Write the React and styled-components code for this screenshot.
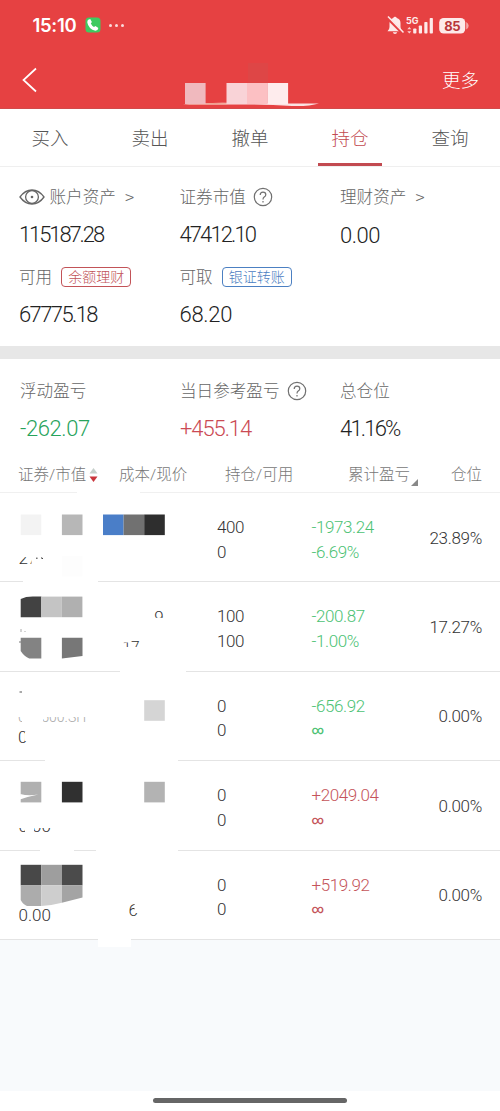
import React from "react";
import styled, { createGlobalStyle } from "styled-components";

const tabs = ["买入", "卖出", "撤单", "持仓", "查询"];

const TILE = 20.6;

const holdings = [
	{ amount: "400", usable: "0", profit: "-1973.24", rate: "-6.69%", share: "23.89%", mask: <MaskOne /> },
	{ amount: "100", usable: "100", profit: "-200.87", rate: "-1.00%", share: "17.27%", mask: <MaskTwo /> },
	{ amount: "0", usable: "0", profit: "-656.92", rate: "∞", share: "0.00%", mask: <MaskThree /> },
	{ amount: "0", usable: "0", profit: "+2049.04", rate: "∞", share: "0.00%", mask: <MaskFour /> },
	{ amount: "0", usable: "0", profit: "+519.92", rate: "∞", share: "0.00%", mask: <MaskFive /> }
];

function Tile({ x, y, fill }) {
	return <rect x={x} y={y} width={TILE} height={TILE} fill={fill} />;
}

function MaskOne() {
	return (
		<Mask>
			<rect x="77" y="-3" width="63" height="5" fill="#fff" />
			<Tile x={20.7} y={21.5} fill="#f3f3f3" />
			<Tile x={61.9} y={21.5} fill="#b7b7b7" />
			<Tile x={103} y={21.5} fill="#4a7ec8" />
			<Tile x={123.6} y={21.5} fill="#717171" />
			<Tile x={144.2} y={21.5} fill="#2e2e2e" />
			<text x="18.5" y="70.5">27</text>
			<rect x="16" y="56" width="40" height="8" fill="#fff" />
			<rect x="31.5" y="63" width="12" height="9" fill="#fff" />
			<path d="M36 65.2h1.6M41 64.8l2 .8" stroke="#333" fill="none" />
			<rect x="61.9" y="63" width={TILE} height={TILE} fill="#fdfdfd" />
			<rect x="23" y="86" width="75" height="7" fill="#fff" />
		</Mask>
	);
}

function MaskTwo() {
	return (
		<Mask>
			<path d="M20.7 17q5-2.4 12-2.4h8.6v20.6H20.7z" fill="#424242" />
			<Tile x={41.2} y={14.6} fill="#c4c4c4" />
			<Tile x={61.8} y={14.6} fill="#b0b0b0" />
			<path d="M21 47v3M24.5 49.5h1" stroke="#aaa" fill="none" />
			<path d="M20.7 55.8h20.6v20.6h-12q-5-2-8.6-7.5z" fill="#838383" />
			<path d="M61.9 55.8h20.6v18.3l-20.6 2.3z" fill="#777" />
			<path d="M19 60h2" stroke="#777" />
			<text x="154.3" y="40.5">9</text>
			<rect x="153" y="35.8" width="12" height="7" fill="#fff" />
			<text x="122.5" y="70" className="small">17</text>
			<rect x="120" y="65" width="22" height="8" fill="#fff" />
			<rect x="120" y="57" width="9.5" height="3.5" fill="#fff" />
			<rect x="120" y="86" width="66" height="6" fill="#fff" />
		</Mask>
	);
}

function MaskThree() {
	return (
		<Mask>
			<path d="M19.5 20h2.5" stroke="#555" />
			<Tile x={144.2} y={28.2} fill="#d5d5d5" />
			<text x="18" y="49.5" className="code">000500.SH</text>
			<rect x="16" y="37" width="75" height="8" fill="#fff" />
			<rect x="22" y="44" width="21" height="8" fill="#fff" />
			<text x="18" y="71">0</text>
			<rect x="25" y="60" width="6" height="9" fill="#fff" />
			<rect x="45" y="86" width="133" height="6" fill="#fff" />
		</Mask>
	);
}

function MaskFour() {
	return (
		<Mask>
			<Tile x={20.7} y={20.8} fill="#b0b0b0" />
			<path d="M20.3 33q8 2.200 18 .5-10 2-18.400 5z" fill="#fff" />
			<Tile x={61.9} y={20.8} fill="#303030" />
			<Tile x={144.2} y={20.8} fill="#b3b3b3" />
			<text x="18.5" y="70.5">0.00</text>
			<rect x="16" y="56" width="40" height="11" fill="#fff" />
			<rect x="25" y="65" width="9" height="7" fill="#fff" />
			<rect x="40" y="86" width="34" height="6" fill="#fff" />
			<rect x="96" y="86" width="82" height="6" fill="#fff" />
		</Mask>
	);
}

function MaskFive() {
	return (
		<Mask>
			<Tile x={20.7} y={13.8} fill="#484848" />
			<Tile x={41.3} y={13.8} fill="#9e9e9e" />
			<Tile x={61.9} y={13.8} fill="#4b4b4b" />
			<path d="M20.7 34.4h20.6V55H27q-4-1.5-6.3-6z" fill="#acacac" />
			<path d="M41.3 34.4h20.6v17.4Q52 54.5 41.3 55z" fill="#cecece" />
			<path d="M61.9 34.4h20.6V46.5l-20.6 5.3z" fill="#a4a4a4" />
			<text x="18.5" y="70">0.00</text>
			<text x="128.5" y="65">6</text>
			<rect x="134.6" y="52" width="5" height="10" fill="#fff" />
			<rect x="98" y="86" width="33" height="10" fill="#fff" />
		</Mask>
	);
}

const Help = () => (
	<svg width="20" height="20" viewBox="0 0 20 20" fill="none" stroke="#707070" strokeWidth="1.2">
		<circle cx="10" cy="10" r="8.7" />
		<path d="M7.2 8q0-2.9 2.8-2.9t2.8 2.6q0 1.3-1.6 2.4Q10 11 10 12.5M10 14v1.4" />
	</svg>
);

const Eye = () => (
	<svg width="26" height="18" viewBox="0 0 26 18" fill="none" stroke="#666" strokeWidth="1.3">
		<path d="M1 9Q6 2 13 2t12 7q-5 7-12 7T1 9z" />
		<circle cx="13" cy="9" r="6.4" />
		<circle cx="13" cy="9" r="1.3" fill="#666" stroke="none" />
	</svg>
);

const StatusIcons = () => (
	<svg width="84" height="24" viewBox="0 0 84 24">
		<g fill="#fdeaea">
			<path d="M1.500 18.2q2-1.700 2-4.200V10q0-4 3.800-5 .2-1.300 1.700-1.300t1.700 1.300q3.800 1 3.800 5v4q0 2.500 2 4.200zM6.800 19.300h4.400q-.4 1.700-2.200 1.700t-2.200-1.700z" />
			<path d="M23.300 14l2 2.300h-4zM23.300 20.500l2-2.300h-4z" opacity=".85" />
			<rect x="27.200" y="15.500" width="3.200" height="5" rx=".8" />
			<rect x="32.800" y="12.500" width="3.200" height="8" rx=".8" />
			<rect x="38.300" y="9" width="3.200" height="11.500" rx=".8" />
			<rect x="43.700" y="5" width="3.200" height="15.500" rx=".8" />
			<rect x="53.200" y="5" width="26" height="15.500" rx="4.500" />
			<path d="M80.200 9q2.500 1.500 2.500 3.800t-2.500 3.700z" opacity=".6" />
		</g>
		<path d="M1.500 5l16 16" stroke="#e64142" strokeWidth="3" />
		<path d="M2 3.500l15.500 16" stroke="#fdeaea" strokeWidth="1.500" />
		<text x="20" y="10.500" fill="#fdeaea" fontSize="9" fontWeight="700">5G</text>
		<text x="66.200" y="17.500" fill="#b8363a" fontSize="13" fontWeight="700" textAnchor="middle" letterSpacing="-.5">85</text>
	</svg>
);

const Hidden = () => (
	<svg width="140" height="46" viewBox="0 0 140 46">
		<rect x="66" y="2" width="20" height="20" fill="#d94a4a" opacity=".6" />
		<path d="M1 43.500q30-3 70-1h66q-10 3-27 2.500-30-2-60-1.500z" fill="#fbe3e3" />
		<path d="M1 43.500q22-2 44-1.300v1.300z" fill="#f0a08e" />
		<rect x="3" y="22" width="20.600" height="21" fill="#f0b9be" />
		<rect x="44.500" y="22" width="20.600" height="21" fill="#f9d3d7" />
		<rect x="65" y="22" width="20.600" height="21" fill="#fcc0c3" />
		<rect x="85.500" y="22" width="20.600" height="21" fill="#feeced" />
	</svg>
);

const App = () => (
	<Page>
		<GlobalStyle />
		<Header>
			<StatusBar>
				<Clock>15:10</Clock>
				<svg width="16" height="16" viewBox="0 0 16 16">
					<rect x=".5" y=".5" width="15" height="15" rx="3.500" fill="#3ecb60" />
					<path d="M3.200 2.700l2-.6 1.700 3-1.100 1.500q1.100 2.300 3.200 3.500l1.400-1 3 1.900q-.4 2.700-2.900 2.700Q3.500 12 2.300 5.400q0-1.800.9-2.700z" fill="#fff" />
				</svg>
				<Dots><i /><i /><i /></Dots>
				<StatusIcons />
			</StatusBar>
			<NavBar>
				<svg width="17" height="26" viewBox="0 0 17 26" fill="none" stroke="#fff" strokeWidth="1.700">
					<path d="M15 1.500L2.500 13 15 24.500" />
				</svg>
				<Hidden />
				<More>更多</More>
			</NavBar>
		</Header>
		<Tabs>
			{tabs.map(tab => <Tab key={tab} $active={tab === "持仓"}>{tab}</Tab>)}
		</Tabs>
		<Assets>
			<div>
				<Label><Eye /><Name $left={4.5}>账户资产</Name><Arrow>&gt;</Arrow></Label>
				<Value $space={-2.1}>115187.28</Value>
			</div>
			<div>
				<Label><Name>证券市值</Name><Help /></Label>
				<Value $space={-1.9}>47412.10</Value>
			</div>
			<div>
				<Label><Name>理财资产</Name><Arrow>&gt;</Arrow></Label>
				<Value $down>0.00</Value>
			</div>
			<div>
				<Label><Name>可用</Name><Badge $color="#c25358">余额理财</Badge></Label>
				<Value $space={-1.6}>67775.18</Value>
			</div>
			<div>
				<Label><Name>可取</Name><Badge $color="#4c80c2">银证转账</Badge></Label>
				<Value $space={-0.3}>68.20</Value>
			</div>
		</Assets>
		<Divider />
		<Summary>
			<div>
				<Label><Name $left={1}>浮动盈亏</Name></Label>
				<Value $left={1} $space={-0.4} $color="#27a35b">-262.07</Value>
			</div>
			<div>
				<Label><Name $left={0.5}>当日参考盈亏</Name><Help /></Label>
				<Value $left={0.5} $space={-1.1} $color="#cb4a54">+455.14</Value>
			</div>
			<div>
				<Label><Name>总仓位</Name></Label>
				<Value $space={-1.8}>41.16%</Value>
			</div>
		</Summary>
		<TableHead>
			<HeadCell>
				证券/市值
				<svg width="9" height="16" viewBox="0 0 9 16">
					<path d="M.5 6.500L4.500 1l4 5.500z" fill="#c5cfca" />
					<path d="M.5 9.500h8L4.500 15z" fill="#c9353b" />
				</svg>
			</HeadCell>
			<HeadCell>成本/现价</HeadCell>
			<HeadCell>持仓/可用</HeadCell>
			<HeadCell>累计盈亏<Corner /></HeadCell>
			<HeadCell>仓位</HeadCell>
		</TableHead>
		{holdings.map((item, i) => (
			<Row key={i}>
				{item.mask}
				<Pair><span>{item.amount}</span><span>{item.usable}</span></Pair>
				<Pair $color={item.profit[0] === "-" ? "#4cc274" : "#c4545a"}>
					<span>{item.profit}</span>
					{item.rate === "∞" ? <Infinite>∞</Infinite> : <span>{item.rate}</span>}
				</Pair>
				<Share>{item.share}</Share>
			</Row>
		))}
		<Blank />
		<HomeArea><HomeBar /></HomeArea>
	</Page>
);

export default App;

const GlobalStyle = createGlobalStyle`
	* {
		box-sizing: border-box;
	}

	body {
		margin: 0;
		background: #fff;
		font-family: Roboto, "Noto Sans CJK SC", sans-serif;
		font-weight: 300;
	}

	svg {
		display: block;
		flex: none;
	}
`;

const Page = styled.div`
	width: 500px;
	height: 1111px;
	overflow: hidden;
	display: flex;
	flex-direction: column;
	background: #fff;
`;

const Header = styled.div`
	height: 109px;
	flex: none;
	background: #e64142;
	border-bottom: 1px solid #d24a4a;
	color: #fff;
`;

const StatusBar = styled.div`
	height: 50px;
	padding: 0 30.5px 0 32.5px;
	display: flex;
	align-items: center;

	> svg:last-child {
		margin-left: auto;
		font-family: Inter, sans-serif;
	}
`;

const Clock = styled.span`
	width: 52.5px;
	font: 600 18.5px Inter, sans-serif;
	letter-spacing: -0.3px;
`;

const Dots = styled.span`
	display: flex;
	gap: 3px;
	margin-left: 7.5px;

	i {
		width: 3px;
		height: 3px;
		border-radius: 50%;
		background: #fbdada;
	}
`;

const NavBar = styled.div`
	height: 58px;
	padding: 0 21px 0 21px;
	display: flex;
	align-items: center;

	> svg:first-child {
		margin-top: 2px;
	}

	> svg + svg {
		margin: 10px 0 0 144px;
	}
`;

const More = styled.span`
	margin-left: auto;
	font-size: 18.5px;
`;

const Tabs = styled.div`
	height: 58px;
	flex: none;
	display: flex;
	border-bottom: 1px solid #efefef;
`;

const Tab = styled.div`
	width: 64px;
	height: 57px;
	margin: 0 18px;
	line-height: 60px;
	font-size: 18.5px;
	text-align: center;
	color: ${p => (p.$active ? "#c24a50" : "#555")};
	border-bottom: 3px solid ${p => (p.$active ? "#c24a50" : "transparent")};
`;

const Assets = styled.div`
	height: 179px;
	flex: none;
	padding: 20px 0 0 19px;
	display: grid;
	grid-template-columns: 160.5px 160.5px 1fr;
	grid-auto-rows: 57px;
	row-gap: 23px;
`;

const Summary = styled(Assets)`
	height: 98px;
	padding-top: 22px;
`;

const Label = styled.div`
	height: 20px;
	display: flex;
	align-items: center;
	color: #666;
`;

const Name = styled.span`
	margin-left: ${p => p.$left || 0}px;
	margin-right: 7.5px;
	font-size: 16.6px;
	line-height: 20px;
	padding-top: 2px;
`;

const Arrow = styled.span`
	margin: -1px 0 0 1.5px;
	font: 300 17px "Noto Sans CJK SC", sans-serif;
	line-height: 20px;
`;

const Badge = styled.span`
	width: 70px;
	height: 20px;
	margin-left: 1.5px;
	flex: none;
	border: 1.5px solid ${p => p.$color};
	border-radius: 4px;
	color: ${p => p.$color};
	font-size: 14px;
	line-height: 18px;
	text-align: center;
`;

const Value = styled.div`
	height: 20px;
	margin-top: ${p => (p.$down ? 18.5 : 17.5)}px;
	margin-left: ${p => p.$left || 0}px;
	font-size: 22px;
	line-height: 20px;
	letter-spacing: ${p => p.$space || -0.5}px;
	color: ${p => p.$color || "#222"};
`;

const Divider = styled.div`
	height: 13px;
	flex: none;
	background: #e7e7e7;
`;

const TableHead = styled.div`
	height: 36px;
	flex: none;
	padding-left: 18px;
	display: grid;
	grid-template-columns: 101px 106px 123px 103px 1fr;
	align-items: center;
	border-bottom: 1px solid #f0f0f0;
`;

const HeadCell = styled.div`
	display: flex;
	align-items: center;
	gap: 3px;
	padding-top: 1px;
	font-size: 15.5px;
	line-height: 20px;
	color: #777;
`;

const Corner = styled.i`
	margin-top: 14px;
	margin-left: -2px;
	border-left: 7px solid transparent;
	border-bottom: 7px solid #888;
`;

/* stacked above the blank area so the last mask can spill over the border */
const Row = styled.div`
	position: relative;
	z-index: 1;
	height: 89.4px;
	flex: none;
	display: grid;
	grid-template-columns: 217px 94.5px 1fr auto;
	padding-right: 18px;
	align-items: center;
	border-bottom: 1.5px solid #e4e4e4;
`;

const Mask = styled.svg.attrs({ width: 217, height: 88 })`
	overflow: visible;
	align-self: start;
	font-size: 17px;
	fill: #333;

	.small {
		font-size: 15.5px;
	}

	.code {
		font-size: 14px;
		fill: #aaa;
	}
`;

const Pair = styled.div`
	display: flex;
	flex-direction: column;
	padding-top: 5px;
	font-size: 17px;
	line-height: 24.6px;
	letter-spacing: -0.4px;
	color: ${p => p.$color || "#333"};
`;

const Infinite = styled.span`
	font-size: 12px;
	font-weight: 500;
`;

const Share = styled.div`
	padding-top: 1px;
	font-size: 17px;
	letter-spacing: -0.3px;
	color: #333;
`;

const Blank = styled.div`
	flex: 1;
	background: #f8fafc;
`;

const HomeArea = styled.div`
	height: 20px;
	flex: none;
	padding-top: 7px;
	background: #fff;
`;

const HomeBar = styled.div`
	width: 194px;
	height: 5px;
	margin: 0 auto;
	border-radius: 3px;
	background: #666;
`;
